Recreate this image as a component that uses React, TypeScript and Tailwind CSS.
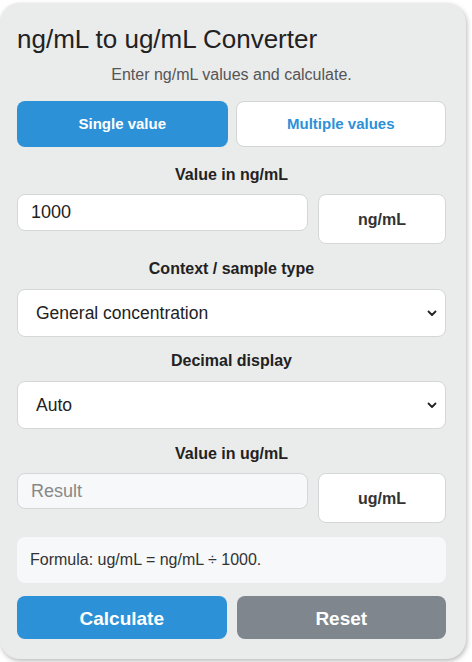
import React, { useState } from 'react';

const font = { fontFamily: '"Liberation Sans", Arial, sans-serif' };

const Chevron = () => (
  <svg width="12" height="12" viewBox="0 0 12 12" className="absolute right-[8px] top-1/2 -translate-y-1/2 pointer-events-none">
    <path d="M2.5 4.5 L6 8 L9.5 4.5" fill="none" stroke="#222" strokeWidth="1.8" strokeLinecap="round" strokeLinejoin="round" />
  </svg>
);

export default function App() {
  const [mode, setMode] = useState<'single' | 'multi'>('single');
  const [value, setValue] = useState('1000');
  const [result, setResult] = useState('');

  const calculate = () => {
    const n = parseFloat(value);
    setResult(isNaN(n) ? '' : String(n / 1000));
  };

  return (
    <div className="w-[472px] h-[662px] bg-white pt-[3px] overflow-hidden" style={font}>
      <div className="w-[466px] rounded-[20px] bg-[#eaebeb] shadow-[1px_2px_5px_rgba(0,0,0,0.28)] pl-[17px] pr-[20px] pt-[21px] pb-[20px] text-[#222]">
        {/* Header */}
        <h1 className="text-[26px] leading-[30px] font-normal text-[#222]">ng/mL to ug/mL Converter</h1>
        <p className="mt-[12px] text-[16px] leading-[18px] text-[#555] text-center">Enter ng/mL values and calculate.</p>

        {/* Mode tabs */}
        <div className="mt-[17px] grid grid-cols-2 gap-[8px]">
          <button
            onClick={() => setMode('single')}
            className={`h-[46px] rounded-[8px] text-[15px] font-bold ${mode === 'single' ? 'bg-[#2d91d8] text-white' : 'bg-white text-[#2d91d8] border border-[#d2d4d6]'}`}
          >
            Single value
          </button>
          <button
            onClick={() => setMode('multi')}
            className={`h-[46px] rounded-[8px] text-[15px] font-bold ${mode === 'multi' ? 'bg-[#2d91d8] text-white' : 'bg-white text-[#2d91d8] border border-[#d2d4d6]'}`}
          >
            Multiple values
          </button>
        </div>

        {/* Input value */}
        <div className="mt-[19px] text-center text-[16px] leading-[18px] font-bold">Value in ng/mL</div>
        <div className="mt-[10px] flex items-start gap-[10px]">
          <input
            value={value}
            onChange={(e) => setValue(e.target.value)}
            className="flex-1 min-w-0 h-[37px] rounded-[8px] border border-[#d4d6d8] bg-white px-[13px] text-[18px] text-[#222] outline-none"
          />
          <div className="w-[128px] h-[50px] pt-[2px] rounded-[8px] border border-[#d4d6d8] bg-white flex items-center justify-center text-[16px] font-bold text-[#333]">ng/mL</div>
        </div>

        {/* Context */}
        <div className="mt-[16px] text-center text-[16px] leading-[18px] font-bold">Context / sample type</div>
        <div className="relative mt-[11px]">
          <select className="w-full h-[48px] appearance-none rounded-[8px] border border-[#d4d6d8] bg-white pl-[18px] text-[17.5px] text-[#222] outline-none">
            <option>General concentration</option>
            <option>Serum / plasma</option>
            <option>Urine</option>
          </select>
          <Chevron />
        </div>

        {/* Decimal display */}
        <div className="mt-[15px] text-center text-[16px] leading-[18px] font-bold">Decimal display</div>
        <div className="relative mt-[11px]">
          <select className="w-full h-[48px] appearance-none rounded-[8px] border border-[#d4d6d8] bg-white pl-[18px] text-[17.5px] text-[#222] outline-none">
            <option>Auto</option>
            <option>2 decimals</option>
            <option>4 decimals</option>
          </select>
          <Chevron />
        </div>

        {/* Result */}
        <div className="mt-[16px] text-center text-[16px] leading-[18px] font-bold">Value in ug/mL</div>
        <div className="mt-[10px] flex items-start gap-[10px]">
          <input
            readOnly
            value={result}
            placeholder="Result"
            className="flex-1 min-w-0 h-[36px] rounded-[8px] border border-[#d4d6d8] bg-[#f7f8fa] px-[13px] text-[18px] text-[#222] placeholder:text-[#888] outline-none"
          />
          <div className="w-[128px] h-[50px] pt-[2px] rounded-[8px] border border-[#d4d6d8] bg-white flex items-center justify-center text-[16px] font-bold text-[#333]">ug/mL</div>
        </div>

        {/* Formula */}
        <div className="mt-[14px] h-[46px] rounded-[8px] bg-[#f7f8f9] px-[13px] flex items-center text-[16px] text-[#333]">
          Formula: ug/mL = ng/mL ÷ 1000.
        </div>

        {/* Actions */}
        <div className="mt-[13px] grid grid-cols-2 gap-[10px]">
          <button onClick={calculate} className="h-[43px] pt-[4px] rounded-[8px] bg-[#2d91d8] text-white text-[19px] font-bold">Calculate</button>
          <button onClick={() => { setValue(''); setResult(''); }} className="h-[43px] pt-[4px] rounded-[8px] bg-[#80868d] text-white text-[19px] font-bold">Reset</button>
        </div>
      </div>
    </div>
  );
}
